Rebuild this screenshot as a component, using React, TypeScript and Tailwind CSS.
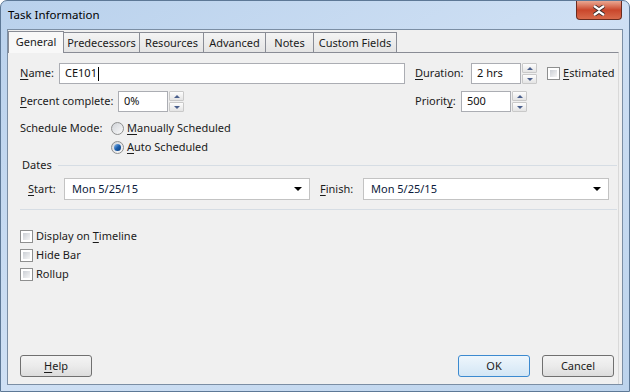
import React from 'react';

const font = { fontFamily: '"Noto Sans", "Open Sans", sans-serif' };

function U({ children }: { children: React.ReactNode }) {
  return <span className="underline underline-offset-2 decoration-1">{children}</span>;
}

function Spinner() {
  return (
    <div className="flex flex-col gap-px w-[15px] h-[21px]">
      <div className="flex-1 flex items-center justify-center border border-[#c9c9c9] bg-gradient-to-b from-[#fdfdfd] to-[#e4e4e4] rounded-[1px]">
        <div className="w-0 h-0 border-x-[3px] border-x-transparent border-b-[3px] border-b-[#4a5f8c]" />
      </div>
      <div className="flex-1 flex items-center justify-center border border-[#c9c9c9] bg-gradient-to-b from-[#fdfdfd] to-[#e4e4e4] rounded-[1px]">
        <div className="w-0 h-0 border-x-[3px] border-x-transparent border-t-[3px] border-t-[#4a5f8c]" />
      </div>
    </div>
  );
}

function TextBox({ value, width, caret }: { value: string; width: string; caret?: boolean }) {
  return (
    <div className={`${width} h-[21px] bg-white border border-[#abadb3] flex items-center pl-[5px] text-[#111]`}>
      {value}
      {caret && <span className="w-px h-[14px] bg-black ml-px" />}
    </div>
  );
}

function CheckBox() {
  return (
    <div className="w-[13px] h-[13px] border border-[#8e8f8f] bg-white p-[2px]">
      <div className="w-full h-full bg-gradient-to-br from-[#cbcfd5] to-[#f6f6f6]" />
    </div>
  );
}

function Radio({ checked }: { checked?: boolean }) {
  return (
    <div className="w-[13px] h-[13px] rounded-full border border-[#8e8f8f] bg-gradient-to-br from-[#d0d3d8] to-[#fbfbfb] flex items-center justify-center">
      {checked && <div className="w-[7px] h-[7px] rounded-full bg-gradient-to-br from-[#8fc2f0] via-[#1b5fae] to-[#0d3d7a]" />}
    </div>
  );
}

function Combo({ width }: { width: string }) {
  return (
    <div className={`${width} h-[22px] bg-white border border-[#c3c3c3] flex items-center pl-[7px] pr-[7px] text-[#0b1a3a]`}>
      <span className="flex-1">Mon 5/25/15</span>
      <div className="w-0 h-0 border-x-[4px] border-x-transparent border-t-[4px] border-t-black" />
    </div>
  );
}

function Button({ children, primary }: { children: React.ReactNode; primary?: boolean }) {
  return (
    <div
      className={`w-[72px] h-[22px] rounded-[3px] border flex items-center justify-center ${
        primary
          ? 'border-[#3c8ad0] bg-gradient-to-b from-[#eef6fc] to-[#d3e6f5]'
          : 'border-[#707070] bg-gradient-to-b from-[#f4f4f4] via-[#ebebeb] to-[#dcdcdc]'
      }`}
    >
      {children}
    </div>
  );
}

const tabs = ['General', 'Predecessors', 'Resources', 'Advanced', 'Notes', 'Custom Fields'];
const tabWidths = ['w-[56px]', 'w-[77px]', 'w-[65px]', 'w-[63px]', 'w-[49px]', 'w-[84px]'];

export default function App() {
  return (
    <div
      style={font}
      className="w-[630px] h-[392px] relative flex flex-col px-[6px] pb-[6px] rounded-t-[7px] border border-[#5d7896] bg-gradient-to-br from-[#b9d1ec] via-[#cfe0f4] to-[#bcd3ec] text-[11px] text-[#1b1b1b]"
    >
      {/* title bar */}
      <div className="h-[28px] flex items-center pl-[1px] text-[11.5px] text-black">Task Information</div>
      <div className="absolute top-0 right-[7px] w-[46px] h-[19px] rounded-b-[4px] border border-t-0 border-[#6b2c1f] bg-gradient-to-b from-[#e9a792] via-[#c9462b] to-[#d86a4b] flex items-center justify-center">
        <svg width="14" height="11" viewBox="0 0 14 11">
          <path d="M2 1 L7 4.5 L12 1 M2 10 L7 6.5 L12 10" stroke="#3a2a2a" strokeWidth="4" fill="none" />
          <path d="M2 1 L7 4.5 L12 1 M2 10 L7 6.5 L12 10" stroke="#fff" strokeWidth="2.2" fill="none" />
        </svg>
      </div>

      {/* client area */}
      <div className="flex-1 flex flex-col border border-[#7b8ea4] bg-[#f0f0f0]">
        {/* tabs */}
        <div className="flex items-end h-[22px]">
          {tabs.map((t, i) =>
            i === 0 ? (
              <div
                key={t}
                className={`${tabWidths[i]} h-[22px] -mb-px z-10 bg-[#f8f8f8] border border-b-0 border-[#898c95] flex items-start justify-center pt-[2px]`}
              >
                {t}
              </div>
            ) : (
              <div
                key={t}
                className={`${tabWidths[i]} h-[20px] -ml-px bg-gradient-to-b from-[#f4f4f4] to-[#e4e4e4] border border-b-0 border-[#898c95] flex items-center justify-center pt-[2px]`}
              >
                {t}
              </div>
            ),
          )}
        </div>

        {/* panel */}
        <div className="flex-1 flex flex-col border-t border-r border-t-[#898c95] border-r-[#d9d9d9] mr-[3px] pl-[12px]">
          <div className="flex items-center mt-[10px]">
            <div className="w-[39px]">
              <U>N</U>ame:
            </div>
            <TextBox value="CE101" width="w-[346px]" caret />
            <div className="w-[56px] ml-[10px]">
              <U>D</U>uration:
            </div>
            <TextBox value="2 hrs" width="w-[50px]" />
            <div className="ml-px">
              <Spinner />
            </div>
            <div className="ml-[10px]">
              <CheckBox />
            </div>
            <div className="ml-[3px]">
              <U>E</U>stimated
            </div>
          </div>

          <div className="flex items-center mt-[7px]">
            <div className="w-[98px]">
              <U>P</U>ercent complete:
            </div>
            <TextBox value="0%" width="w-[50px]" />
            <div className="ml-px">
              <Spinner />
            </div>
            <div className="w-[46px] ml-[231px]">
              Priorit<U>y</U>:
            </div>
            <TextBox value="500" width="w-[50px]" />
            <div className="ml-px">
              <Spinner />
            </div>
          </div>

          <div className="flex items-center mt-[8px] h-[16px]">
            <div className="w-[91px]">Schedule Mode:</div>
            <Radio />
            <div className="ml-[3px]">
              <U>M</U>anually Scheduled
            </div>
          </div>
          <div className="flex items-center mt-[3px] h-[16px] pl-[91px]">
            <Radio checked />
            <div className="ml-[3px]">
              <U>A</U>uto Scheduled
            </div>
          </div>

          <div className="flex items-center mt-[2px] h-[16px] pl-[2px] pr-[1px]">
            <span>Dates</span>
            <div className="flex-1 ml-[6px] border-t border-[#d6dde4]" />
          </div>

          <div className="flex items-center mt-[5px]">
            <div className="w-[44px] pl-[8px]">
              <U>S</U>tart:
            </div>
            <Combo width="w-[246px]" />
            <div className="w-[43px] ml-[10px]">
              <U>F</U>inish:
            </div>
            <Combo width="w-[246px]" />
          </div>

          <div className="mt-[9px] mr-[1px] border-t border-[#d6dde4]" />

          <div className="flex flex-col gap-[6px] mt-[20px]">
            {[
              <>
                Display on <U>T</U>imeline
              </>,
              <>Hide Bar</>,
              <>Rollup</>,
            ].map((l, i) => (
              <div key={i} className="flex items-center h-[13px]">
                <CheckBox />
                <div className="ml-[3px]">{l}</div>
              </div>
            ))}
          </div>

          <div className="flex-1" />

          <div className="flex items-center mb-[7px]">
            <Button>
              <U>H</U>elp
            </Button>
            <div className="flex-1" />
            <Button primary>OK</Button>
            <div className="ml-[12px] mr-[4px]">
              <Button>Cancel</Button>
            </div>
          </div>
        </div>
      </div>
    </div>
  );
}
